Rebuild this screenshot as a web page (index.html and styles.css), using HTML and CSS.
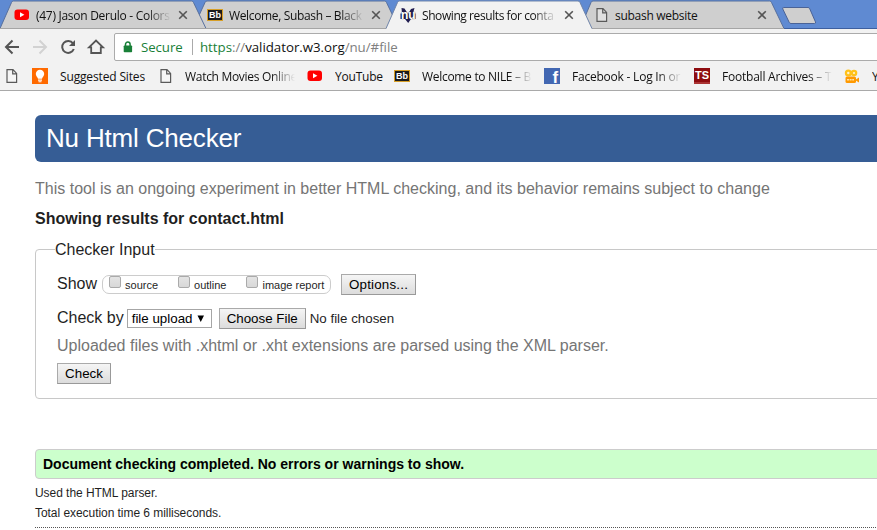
FILE: index.html
```
<!DOCTYPE html>
<html lang="en">
<head>
<meta charset="utf-8">
<title>Showing results for contact.html</title>
<link rel="stylesheet" href="styles.css">
</head>
<body>
<svg width="0" height="0" class="defs">
  <defs>
    <symbol id="yt" viewBox="0 0 16 12"><rect x=".5" y=".5" width="14.5" height="10.5" rx="3" fill="#f00"/><path d="M6 3.2v5l4.4-2.5z" fill="#fff"/></symbol>
    <symbol id="page" viewBox="0 0 12 14"><path d="M1 .7h6l3.6 3.7v8.9H1zM6.7.9v3.9h3.8" fill="#fdfdfd" fill-opacity=".35" stroke="#5a5a5a" stroke-width="1.2"/></symbol>
    <symbol id="close" viewBox="0 0 10 10"><path d="M1.2 1.2l7.6 7.6M8.8 1.2L1.2 8.8" stroke="#555" stroke-width="1.6"/></symbol>
  </defs>
</svg>
<header class="browser">
  <div class="strip">
    <svg class="shapes" width="877" height="29" viewBox="0 0 877 29">
      <path d="M0 28.5H877" stroke="#3d5f9f"/>
      <path d="M193 28.5L205 2.5q.5-1.5 2-1.5H384.500q1.500 0 2 1.500L399 28.500z" fill="#cfcfcf" stroke="#57709e"/>
      <path d="M580 28.500L591 2.500q.5-1.500 2-1.500H769.500q1.500 0 2 1.500L784 28.500z" fill="#cfcfcf" stroke="#57709e"/>
      <path d="M0 28.500L11.500 2.500q.5-1.500 2-1.500H191.500q1.500 0 2 1.500L206 28.500z" fill="#cfcfcf" stroke="#57709e"/>
      <path d="M0 28.500H784" stroke="#a5a5a5"/>
      <path d="M386 29L397.500 2.500q.5-1.500 2-1.500H578q1.500 0 2 1.500L592 29z" fill="#f2f2f2"/>
      <path d="M386 28.500L397.500 2.500q.5-1.500 2-1.500H578q1.500 0 2 1.500L592 28.500" fill="none" stroke="#7085aa"/>
      <path d="M783.500 7.500H808q1.200 0 1.700 1.200L815.500 22q.4 1.500-1 1.500H791q-1.300 0-1.800-1.200L782.800 9q-.4-1.500.7-1.500z" fill="#cfcfcf" stroke="#4a6397"/>
    </svg>
    <div class="tab t1"><svg class="i-yt"><use href="#yt"/></svg><span class="label fade">(47) Jason Derulo - Colors</span><svg class="x"><use href="#close"/></svg></div>
    <div class="tab t2"><span class="bb">Bb</span><span class="label fade">Welcome, Subash – Black</span><svg class="x"><use href="#close"/></svg></div>
    <div class="tab t3"><span class="nu"><svg width="16" height="15" viewBox="0 0 16 15"><path d="M1.500 0l3 .5L8 6l3-5 3.500-1L13 5.500h2.500v5.500H11l-2.800 4L5 11H.5V5.500H2z" fill="#211d50"/></svg><b>nu</b></span><span class="label fade">Showing results for conta</span><svg class="x"><use href="#close"/></svg></div>
    <div class="tab t4"><svg class="i-page"><use href="#page"/></svg><span class="label">subash website</span><svg class="x"><use href="#close"/></svg></div>
  </div>
  <div class="toolbar">
    <svg class="nav" width="110" height="30" viewBox="0 0 110 30" fill="none" stroke="#555" stroke-width="2">
      <path d="M19 15H6.500M12.500 8.500L6 15l6.500 6.500"/>
      <path d="M33 15h12.500M39.500 8.500L46 15l-6.500 6.500" stroke="#d2d2d2"/>
      <path d="M73 11.300A6 6 0 1 0 73.800 17"/><path d="M75 8v6h-6z" fill="#555" stroke="none"/>
      <path d="M89 15.300L96 8.500l7 6.800h-2.200v5.700h-9.600v-5.700z" stroke-width="1.800"/>
    </svg>
    <div class="omnibox">
      <svg width="10" height="12" viewBox="0 0 10 12"><path d="M2.500 5V3.300a2.300 2.300 0 0 1 4.600 0V5" fill="none" stroke="#198038" stroke-width="1.500"/><rect x=".7" y="4.500" width="8.400" height="6.800" rx=".8" fill="#198038"/></svg>
      <span class="secure">Secure</span><span class="url"><i class="g">https</i><i>://</i>validator.w3.org<i>/nu/#file</i></span>
    </div>
  </div>
  <nav class="bookmarks">
    <svg class="i-page b0"><use href="#page"/></svg>
    <a class="bm b1"><svg width="16" height="16"><rect width="16" height="16" fill="#ff6a00"/><path d="M8 1.800a4.200 4.200 0 0 0-4.200 4.300c0 2 1.700 2.800 2.200 4.700h4c.5-1.900 2.200-2.700 2.200-4.700A4.200 4.200 0 0 0 8 1.800zM6 11.500h4v1.200H6zM6.500 13.300h3v1h-3z" fill="#fff"/></svg><span>Suggested Sites</span></a>
    <a class="bm b2"><svg class="i-page"><use href="#page"/></svg><span class="fade">Watch Movies Online</span></a>
    <a class="bm b3"><svg class="i-yt"><use href="#yt"/></svg><span>YouTube</span></a>
    <a class="bm b4"><b class="bb">Bb</b><span class="fade">Welcome to NILE – B</span></a>
    <a class="bm b5"><b class="fb">f</b><span class="fade">Facebook - Log In or</span></a>
    <a class="bm b6"><b class="ts">TS</b><span class="fade">Football Archives – T</span></a>
    <a class="bm b7"><svg width="16" height="15"><g fill="#ffc21a"><circle cx="4.300" cy="4" r="3.500"/><circle cx="10" cy="4" r="3.300"/></g><circle cx="4.300" cy="4" r="1.200" fill="#fff3d0"/><circle cx="10" cy="4" r="1.100" fill="#fff3d0"/><rect x="1.500" y="7.500" width="10.500" height="6.500" rx="1.500" fill="#f90"/><path d="M11 11l4-2.500v5z" fill="#f90"/><path d="M3 10.700h7" stroke="#ffe2a0" stroke-width="1.500" stroke-dasharray="2 .6"/></svg><span>YouTube</span></a>
  </nav>
</header>
<main>
  <h1>Nu Html Checker</h1>
  <p class="intro">This tool is an ongoing experiment in better HTML checking, and its behavior remains subject to change</p>
  <h2>Showing results for contact.html</h2>
  <fieldset>
    <legend>Checker Input</legend>
    <div class="row show"><span class="cap">Show</span>
      <div class="opts"><label><i></i>source</label><label><i></i>outline</label><label><i></i>image report</label></div>
      <div class="btn options">Options...</div></div>
    <div class="row by"><span class="cap">Check by</span><div class="select">file upload<svg width="8" height="8" viewBox="0 0 8 8"><path d="M.5.500h6.500L3.750 7z"/></svg></div><div class="btn choose">Choose File</div><span class="none">No file chosen</span></div>
    <p class="hint">Uploaded files with .xhtml or .xht extensions are parsed using the XML parser.</p>
    <div class="btn check">Check</div>
  </fieldset>
  <p class="success">Document checking completed. No errors or warnings to show.</p>
  <p class="detail">Used the HTML parser.</p>
  <p class="detail">Total execution time 6 milliseconds.</p>
  <hr>
</main>
</body>
</html>
```
FILE: styles.css
```
* { box-sizing: border-box; }
body { margin: 0; height: 530px; overflow: hidden; background: #fff; color: #1f1f1f; font-family: "Liberation Sans", Arial, sans-serif; }
.defs { position: absolute; }
svg { display: block; flex: none; }
i { font-style: normal; }
h1, h2, p { margin: 0; font-weight: normal; white-space: nowrap; }

.browser { height: 91px; background: #f2f2f2; border-bottom: 1px solid #a9a9a9; font-family: "Open Sans", "Noto Sans", sans-serif; font-size: 12px; color: #111; overflow: hidden; }
.strip { position: relative; display: flex; height: 29px; background: #5f8ad2; }
.shapes { position: absolute; left: 0; top: 0; }
.tab { position: relative; display: flex; align-items: center; height: 30px; flex: none; }
.t1 { width: 193px; padding-left: 14px; }
.t2 { width: 193px; padding-left: 14px; }
.t3 { width: 193px; padding-left: 14px; }
.t4 { width: 193px; padding-left: 17px; }
.label { width: 135px; margin-left: 6px; overflow: hidden; white-space: nowrap; letter-spacing: -.28px; }
.t2 .label { letter-spacing: -.35px; }
.t3 .label { letter-spacing: -.42px; }
.fade { -webkit-mask-image: linear-gradient(to right, #000 calc(100% - 24px), transparent); mask-image: linear-gradient(to right, #000 calc(100% - 24px), transparent); }
.x { width: 10px; height: 10px; margin-left: 7px; }
.t4 .label { margin-left: 7px; width: 135px; }
.t4 .x { margin-left: 7px; }
.i-yt { width: 16px; height: 12px; }
.i-page { width: 12px; height: 14px; }
.bb { display: flex; align-items: center; justify-content: center; flex: none; width: 16px; height: 12px; background: #1b1b1b; border: 1px solid #d79f28; color: #fff; font: bold 9px/10px "Liberation Sans", sans-serif; letter-spacing: 0; }
.nu { position: relative; flex: none; width: 16px; height: 15px; }
.nu b { position: absolute; left: 1px; top: 2px; font: bold 12px/11px "Liberation Sans", sans-serif; color: #fff; text-shadow: 0 0 1px #222; }

.toolbar { display: flex; height: 36px; padding-top: 4px; }
.omnibox { display: flex; align-items: center; margin-left: 4px; width: 780px; height: 28px; flex: none; border: 1px solid #ababab; border-radius: 2px; background: #fff; padding-left: 8px; font-size: 13.300px; }
.nav { flex: none; margin-top: -1px; }
.secure { margin-left: 8px; width: 51px; letter-spacing: -.1px; color: #198038; white-space: nowrap; }
.url { border-left: 1px solid #aaa; line-height: 16px; padding-left: 7px; white-space: nowrap; letter-spacing: -.03px; }
.url i { color: #808080; }
.url .g { color: #198038; }

.bookmarks { position: relative; display: flex; align-items: center; height: 22px; }
.b0 { margin-left: 6px; margin-right: 14px; }
.bm { display: flex; align-items: center; flex: none; white-space: nowrap; letter-spacing: -.22px; }
.bm span { overflow: hidden; margin-left: 12px; }
.b1 { width: 128px; }
.b1 span { letter-spacing: -.15px; }
.b2 { width: 147px; }
.b2 span { margin-left: 13px; width: 110px; letter-spacing: -.3px; }
.b3 { width: 87px; }
.b4 { width: 150px; }
.b4 span { width: 110px; letter-spacing: -.3px; }
.b5 { width: 150px; }
.b5 span { width: 110px; }
.b6 { width: 150px; }
.b6 span { width: 110px; }
.fb { width: 16px; height: 16px; background: #4267b2; color: #fff; font: bold 17px/19px "Liberation Sans", sans-serif; text-align: right; padding-right: 2px; overflow: hidden; }
.ts { width: 16px; height: 16px; background: #8e0c10; color: #fff; font: bold 11px/14px "Liberation Sans", sans-serif; letter-spacing: 0; text-align: center; border-bottom: 2px solid #a33; }

main { padding: 24px 0 0 35px; width: 900px; }
h1 { height: 47px; padding-left: 11px; background: #365d95; border-radius: 6px; color: #fff; font-size: 26px; line-height: 46px; letter-spacing: -.18px; }
.intro { margin-top: 17px; font-size: 16px; line-height: 20px; color: #757575; letter-spacing: .008px; }
h2 { margin-top: 10px; font-size: 16px; line-height: 20px; font-weight: bold; }
fieldset { margin: 11px 0 0; height: 159px; border: 1px solid #c8c8c8; border-radius: 4px; padding: 0 0 0 21px; font-size: 16px; }
legend { margin-left: -2px; padding: 0; line-height: 20px; height: 18px; }
.row { display: flex; align-items: center; }
.show { height: 21px; margin-top: 16px; }
.cap { white-space: nowrap; }
.show .cap, .by .cap { margin-top: -2px; }
.opts { display: flex; align-items: center; width: 229px; height: 19px; margin-left: 5px; border: 1px solid #ccc; border-radius: 7px; font-size: 11px; }
.opts label { position: relative; display: flex; align-items: center; height: 17px; padding-top: 1px; white-space: nowrap; }
.opts label i { width: 12px; height: 12px; margin: -6px 4px 0 6px; background: linear-gradient(#e4e4e4, #d8d8d8); border: 1px solid #aaa; border-radius: 2px; }
.opts label:nth-child(2) i { margin-left: 20px; }
.opts label:nth-child(3) i { margin-left: 20px; }
.btn { display: flex; align-items: center; justify-content: center; height: 21px; border: 1px solid #a3a3a3; border-color: #aaa #999 #999 #aaa; background: linear-gradient(#f5f5f5, #dcdcdc); color: #000; font-size: 13.333px; white-space: nowrap; flex: none; }
.options { width: 75px; margin-left: 10px; letter-spacing: .2px; }
.by { height: 21px; margin-top: 13px; }
.select { display: flex; align-items: center; width: 85px; height: 19px; margin-left: 3px; padding-left: 4px; border: 1px solid #a6a6a6; color: #000; font-size: 13.333px; white-space: nowrap; }
.select svg { margin-left: 5px; }
.choose { width: 87px; margin-left: 7px; }
.none { margin-left: 4px; font-size: 13.333px; }
.hint { margin-top: 7px; line-height: 20px; color: #757575; }
.check { width: 54px; margin-top: 7px; }
.success { height: 30px; margin-top: 50px; padding-left: 7px; background: #cfc; border: 1px solid #ccc; border-radius: 4px; color: #000; font-size: 14px; font-weight: bold; line-height: 29px; }
.detail { font-size: 12px; line-height: 20px; letter-spacing: -.05px; }
.success + .detail { margin-top: 4px; }
hr { margin: 4px 0 0; border: 0; border-top: 1px dotted #555; }
```
